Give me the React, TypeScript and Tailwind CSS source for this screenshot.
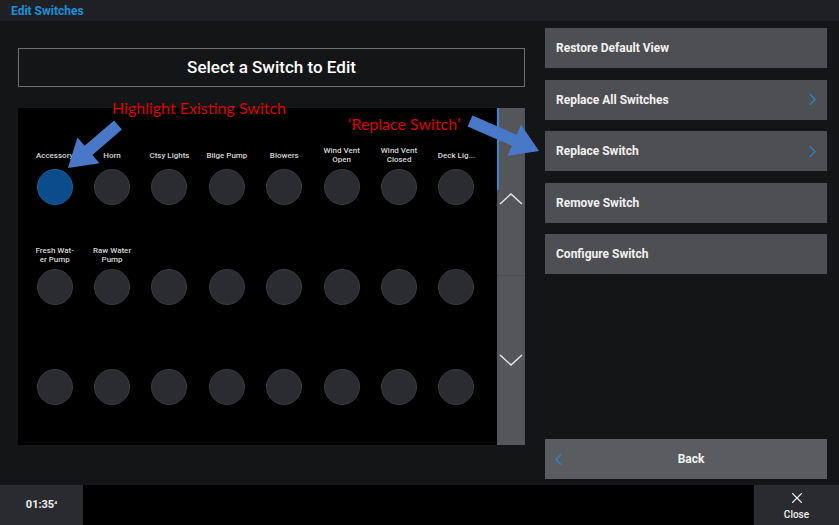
import { X } from "lucide-react";

const UI_FONT = { fontFamily: "Roboto, 'Liberation Sans', sans-serif" };
const NOTE_FONT = { fontFamily: "Lato, 'Open Sans', sans-serif" };

const ROWS: (string | null)[][] = [
  ["Accessory", "Horn", "Ctsy Lights", "Bilge Pump", "Blowers", "Wind Vent\nOpen", "Wind Vent\nClosed", "Deck Lig..."],
  ["Fresh Wat-\ner Pump", "Raw Water\nPump", null, null, null, null, null, null],
  [null, null, null, null, null, null, null, null],
];

const ACTIONS = [
  { label: "Restore Default View", more: false },
  { label: "Replace All Switches", more: true },
  { label: "Replace Switch", more: true },
  { label: "Remove Switch", more: false },
  { label: "Configure Switch", more: false },
];

// block arrow polygon from tail to tip
function arrowPoints(x1: number, y1: number, x2: number, y2: number, shaft = 6, head = 17, headLen = 27) {
  const dx = x2 - x1;
  const dy = y2 - y1;
  const len = Math.hypot(dx, dy);
  const ux = dx / len;
  const uy = dy / len;
  const px = -uy;
  const py = ux;
  const bx = x2 - ux * headLen;
  const by = y2 - uy * headLen;
  const pts = [
    [x1 + px * shaft, y1 + py * shaft],
    [bx + px * shaft, by + py * shaft],
    [bx + px * head, by + py * head],
    [x2, y2],
    [bx - px * head, by - py * head],
    [bx - px * shaft, by - py * shaft],
    [x1 - px * shaft, y1 - py * shaft],
  ];
  return pts.map((p) => p.map((v) => v.toFixed(1)).join(",")).join(" ");
}

function Chevron({ dir, className }: { dir: "up" | "down" | "left" | "right"; className?: string }) {
  const d = {
    up: "M1 11 L12 1 L23 11",
    down: "M1 1 L12 11 L23 1",
    left: "M7 1 L1 7 L7 13",
    right: "M1 1 L7 7 L1 13",
  }[dir];
  const box = dir === "up" || dir === "down" ? "0 0 24 12" : "0 0 8 14";
  return (
    <svg viewBox={box} className={className} fill="none" stroke="currentColor" strokeWidth="1.4">
      <path d={d} />
    </svg>
  );
}

export default function App() {
  return (
    <div className="relative flex h-[525px] w-[839px] flex-col overflow-hidden bg-[#141517]" style={UI_FONT}>
      {/* Title bar */}
      <div className="flex h-[21px] items-center bg-[#1f2023] pl-[11px] text-[12px] font-bold text-[#1c8fd9]">
        Edit Switches
      </div>

      <div className="flex flex-1">
        {/* Left: switch grid */}
        <div className="ml-[18px] flex w-[507px] flex-col pt-[27px]">
          <div className="flex h-[39px] items-center justify-center border border-[#6e6f72] text-[17px] font-medium text-white">
            Select a Switch to Edit
          </div>
          <div className="mt-[21px] flex h-[337px]">
            <div className="flex-1 bg-black pl-[8px] pt-[37px]">
              {ROWS.map((row, r) => (
                <div key={r} className="grid h-[100px] grid-cols-[repeat(8,57.4px)]">
                  {row.map((label, c) => (
                    <div key={c} className="flex flex-col items-center">
                      <div className="flex h-[20px] items-center whitespace-pre text-center text-[8px] font-medium leading-[9px] text-[#d6d6d6]">
                        {label ?? ""}
                      </div>
                      <div
                        className={`mt-[4px] h-[36px] w-[36px] rounded-full border ${
                          r === 0 && c === 0 ? "border-[#1d5f9e] bg-[#0c4c8b]" : "border-[#3b3c40] bg-[#2b2c2f]"
                        }`}
                      />
                    </div>
                  ))}
                </div>
              ))}
            </div>
            <div className="flex w-[28px] flex-col bg-[#55565a]">
              <div className="flex h-[168px] flex-col border-b border-[#4b4c50]">
                <div className="h-[82px] w-[2px] bg-[#2a8bd6]" />
                <div className="flex justify-center pt-[3px] text-[#e8e8e8]">
                  <Chevron dir="up" className="h-[12px] w-[24px]" />
                </div>
              </div>
              <div className="flex justify-center pt-[78px] text-[#e8e8e8]">
                <Chevron dir="down" className="h-[12px] w-[24px]" />
              </div>
            </div>
          </div>
        </div>

        {/* Right: actions */}
        <div className="ml-[20px] flex w-[282px] flex-col pt-[7px] pb-[6px]">
          <div className="flex flex-col gap-[11.5px]">
            {ACTIONS.map((a) => (
              <div
                key={a.label}
                className="flex h-[40px] items-center justify-between bg-[#4e4f52] pl-[11px] pr-[11px] text-[12px] font-bold text-[#f2f2f2]"
              >
                <span>{a.label}</span>
                {a.more && <Chevron dir="right" className="h-[13px] w-[7px] text-[#2b86cc]" />}
              </div>
            ))}
          </div>
          <div className="relative mt-auto flex h-[40px] items-center justify-center bg-[#5b5c60] pl-[10px] text-[12px] font-bold text-[#f2f2f2]">
            <Chevron dir="left" className="absolute left-[10px] h-[13px] w-[7px] text-[#2b86cc]" />
            Back
          </div>
        </div>
      </div>

      {/* Bottom bar */}
      <div className="flex h-[40px] justify-between bg-black">
        <div className="flex w-[83px] items-center justify-center bg-[#2a2b2e] text-[11px] font-bold text-[#f0f0f0]">
          01:35<span className="text-[8px] leading-none">&#x2074;</span>
        </div>
        <div className="flex w-[85px] flex-col items-center justify-center bg-[#2a2b2e] text-[#f0f0f0]">
          <X className="h-[18px] w-[18px]" strokeWidth={1.5} />
          <span className="text-[10px] font-medium">Close</span>
        </div>
      </div>

      {/* Annotations */}
      <div className="absolute left-[112px] top-[100px] text-[16px] leading-none text-[#de0000]" style={NOTE_FONT}>
        Highlight Existing Switch
      </div>
      <div className="absolute left-[348px] top-[116px] text-[16px] leading-none text-[#de0000]" style={NOTE_FONT}>
        ‘Replace Switch’
      </div>
      <svg className="pointer-events-none absolute left-0 top-0" width="839" height="525">
        <polygon points={arrowPoints(118, 125, 68, 168)} fill="#4a78c8" />
        <polygon points={arrowPoints(470, 121, 539, 151)} fill="#4a78c8" />
      </svg>
    </div>
  );
}
